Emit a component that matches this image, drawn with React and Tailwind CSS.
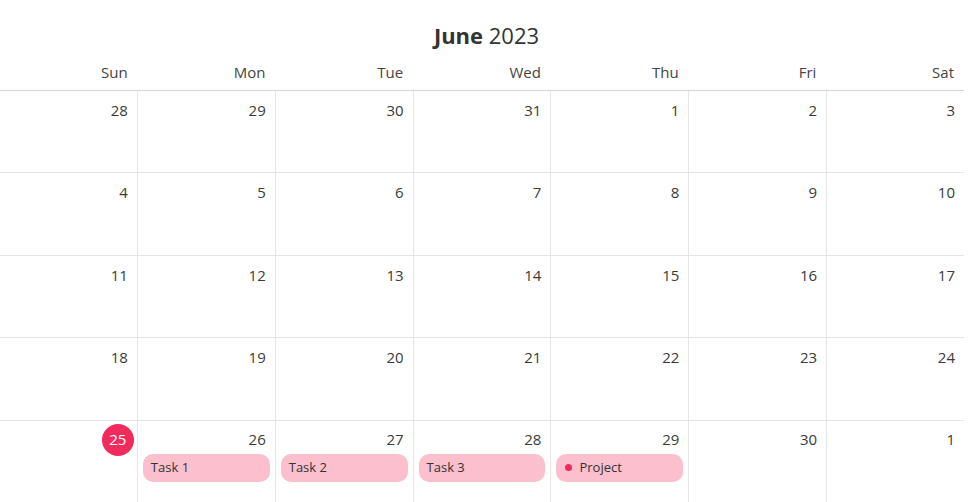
const days = ['Sun', 'Mon', 'Tue', 'Wed', 'Thu', 'Fri', 'Sat'];

const weeks = [
  [28, 29, 30, 31, 1, 2, 3],
  [4, 5, 6, 7, 8, 9, 10],
  [11, 12, 13, 14, 15, 16, 17],
  [18, 19, 20, 21, 22, 23, 24],
  [25, 26, 27, 28, 29, 30, 1],
];

// eventos por "semana-columna"
const events = {
  '4-1': { title: 'Task 1' },
  '4-2': { title: 'Task 2' },
  '4-3': { title: 'Task 3' },
  '4-4': { title: 'Project', dot: true },
};

function DayCell({ day, today, event, last }) {
  return (
    <div className={`flex-1 min-w-0 flex flex-col ${last ? '' : 'border-r border-[#e5e5e5]'}`}>
      <div className="flex justify-end pt-[3px] pr-[3px]">
        {today ? (
          <span className="h-8 w-8 rounded-full bg-[#f22b5d] text-white flex items-center justify-center text-[15px]">
            {day}
          </span>
        ) : (
          <span className="h-8 flex items-center px-[6px] text-[15px] text-[#3a3a3a]">{day}</span>
        )}
      </div>
      {event && (
        <div className="mx-[5px] -mt-[2px] h-7 rounded-[10px] bg-[#fbbfcd] flex items-center pl-2 text-[13px] text-[#333]">
          {event.dot && <span className="w-[7px] h-[7px] rounded-full bg-[#f22b5d] mr-[7px] ml-[1px]" />}
          {event.title}
        </div>
      )}
    </div>
  );
}

export default function App() {
  return (
    <div className="h-screen w-full bg-white flex flex-col" style={{ fontFamily: '"Open Sans", "Noto Sans", sans-serif' }}>
      {/* Title */}
      <div className="pt-[21px] pb-[5px] text-center text-[22px] leading-[29px] text-[#333]">
        <span className="font-bold">June</span> 2023
      </div>

      <div className="flex-1 flex flex-col mr-[9px]">
        {/* Day names */}
        <div className="h-9 flex border-b border-[#d4d4d4]">
          {days.map((d) => (
            <div key={d} className="flex-1 flex items-center justify-end pr-[10px] text-[15px] text-[#444]">
              {d}
            </div>
          ))}
        </div>

        {/* Weeks */}
        {weeks.map((week, wi) => (
          <div key={wi} className={`flex-1 flex ${wi < weeks.length - 1 ? 'border-b border-[#e5e5e5]' : ''}`}>
            {week.map((day, di) => (
              <DayCell
                key={di}
                day={day}
                today={wi === 4 && di === 0}
                event={events[`${wi}-${di}`]}
                last={di === 6}
              />
            ))}
          </div>
        ))}
      </div>
    </div>
  );
}
